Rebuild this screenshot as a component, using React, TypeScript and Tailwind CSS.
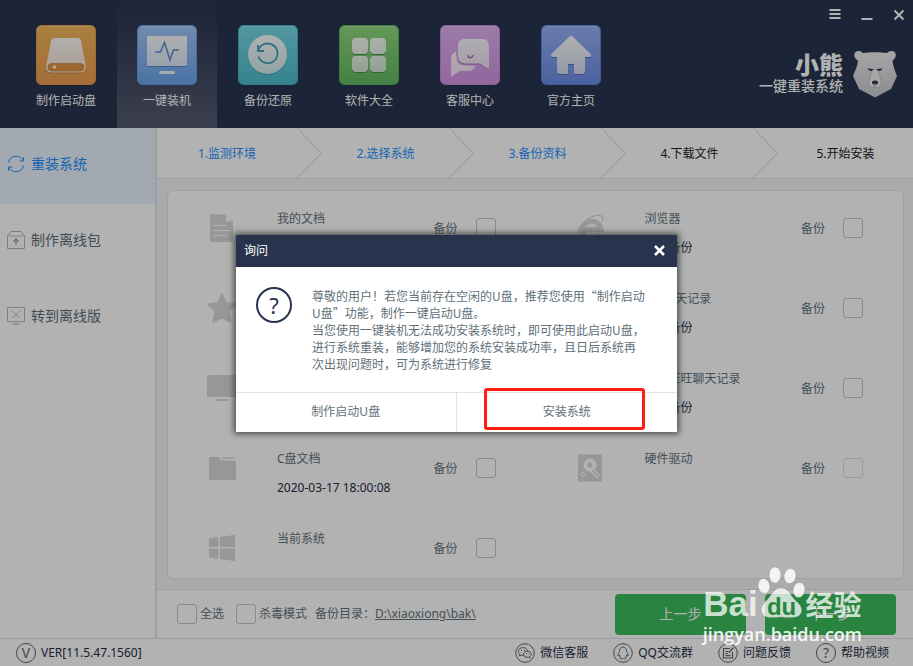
import { useId, type ReactNode } from "react";

/* ---------- Toolbar artwork ---------- */

function Tile({ top, bottom, edge, children }: { top: string; bottom: string; edge: string; children: (fill: string) => ReactNode }) {
  const id = useId();
  return (
    <svg width="60" height="60" viewBox="0 0 60 60" aria-hidden="true">
      <defs>
        <linearGradient id={`${id}bg`} x1="0" y1="0" x2="0" y2="1">
          <stop offset="0" stopColor={top} />
          <stop offset="1" stopColor={bottom} />
        </linearGradient>
        <linearGradient id={`${id}fg`} gradientUnits="userSpaceOnUse" x1="0" y1="10" x2="0" y2="50">
          <stop offset="0" stopColor="#fff" stopOpacity="0.97" />
          <stop offset="1" stopColor="#fff" stopOpacity="0.75" />
        </linearGradient>
      </defs>
      <rect x="0.5" y="0.5" width="59" height="59" rx="5" fill={`url(#${id}bg)`} stroke={edge} />
      <path d="M5 1.5H55" stroke="#fff" strokeOpacity="0.3" />
      {children(`url(#${id}fg)`)}
    </svg>
  );
}

const DiskTile = () => (
  <Tile top="#f2b95c" bottom="#ec9c50" edge="#e59b44">
    {(f) => (
      <>
        <path d="M19 14H41C43.600 14 44.600 15 45 17L49.500 40C50.500 45 49 48.500 45 48.500H15C11 48.500 9.500 45 10.500 40L15 17C15.400 15 16.400 14 19 14Z" fill="#b8641c" opacity="0.5" />
        <path d="M19 13H41C43.600 13 44.600 14 45 16L49.500 39C50.500 44 49 47.500 45 47.500H15C11 47.500 9.500 44 10.500 39L15 16C15.400 14 16.400 13 19 13Z" fill={f} />
        <rect x="12" y="38.500" width="36" height="7.500" rx="3.700" fill="#e39645" stroke="#c27a36" strokeWidth="0.600" />
        <circle cx="18.500" cy="42" r="1.800" fill="#fff" fillOpacity="0.900" />
      </>
    )}
  </Tile>
);

const MonitorTile = () => (
  <Tile top="#a2c7f7" bottom="#6ba4ec" edge="#669ee4">
    {(f) => (
      <>
        <rect x="10" y="12" width="40" height="30" rx="1" fill="#2c62a8" opacity="0.500" />
        <rect x="10" y="11" width="40" height="30" rx="1" fill={f} />
        <rect x="22" y="46" width="16" height="3" rx="1.500" fill="#fff" fillOpacity="0.900" />
        <path d="M18 27H23.500L27.500 17.500L33 35L36.500 25H42" fill="none" stroke="#5b8fd2" strokeWidth="1.500" />
      </>
    )}
  </Tile>
);

const RestoreTile = () => (
  <Tile top="#77d8e6" bottom="#4bbdcb" edge="#46b4c4">
    {(f) => (
      <>
        <circle cx="29.500" cy="30.500" r="19.500" fill="#258894" opacity="0.500" />
        <circle cx="29.500" cy="29.500" r="19.500" fill={f} />
        <path d="M21 24A9.800 9.800 0 1 1 20.500 31.500" fill="none" stroke="#43a3b1" strokeWidth="1.800" />
        <path d="M20 20V26H26" fill="none" stroke="#43a3b1" strokeWidth="1.800" />
      </>
    )}
  </Tile>
);

const AppsTile = () => (
  <Tile top="#90da80" bottom="#63b962" edge="#57b257">
    {(f) => (
      <>
        {[13, 31].map((x) =>
          [13, 31].map((y) => (
            <g key={`${x}-${y}`}>
              <rect x={x} y={y + 1} width="16" height="16" rx="4" fill="#2c7a2d" opacity="0.600" />
              <rect x={x} y={y} width="16" height="16" rx="4" fill={f} />
            </g>
          )),
        )}
      </>
    )}
  </Tile>
);

const ChatTile = () => (
  <Tile top="#e0b2f2" bottom="#d194e2" edge="#c488d6">
    {(f) => (
      <>
        <path d="M16 27C12.500 28 11 31 11 34V52L20 46H28C32 46 34 44 35.500 40.500H25C19 40.500 16.500 37 16.500 32Z" fill={f} />
        <path d="M25 15H42C46.500 15 49 17.500 49 22V45.500L39.500 39.500H26C20.500 39.500 18 36.500 18 32V22C18 17.500 20.500 15 25 15Z" fill="#8a4d9b" opacity="0.500" />
        <path d="M25 14H42C46.500 14 49 16.500 49 21V44.500L39.500 38.500H26C20.500 38.500 18 35.500 18 31V21C18 16.500 20.500 14 25 14Z" fill={f} />
        <path d="M27.500 30.500C28.500 33.500 32 33.500 33 30.500" fill="none" stroke="#a967bb" strokeWidth="1.300" strokeLinecap="round" />
      </>
    )}
  </Tile>
);

const HomeTile = () => (
  <Tile top="#98b2f5" bottom="#6b8de6" edge="#6184d8">
    {(f) => (
      <>
        <path d="M28.500 12.500Q30 11 31.500 12.500L49.500 30Q51.500 33 48 33H44V47Q44 50 41.500 50H33V40H27V50H18.500Q16 50 16 47V33H12Q8.500 33 10.500 30Z" fill="#30489a" opacity="0.500" />
        <path d="M28.500 11.500Q30 10 31.500 11.500L49.500 29Q51.500 32 48 32H44V46Q44 49 41.500 49H33V39H27V49H18.500Q16 49 16 46V32H12Q8.500 32 10.500 29Z" fill={f} />
      </>
    )}
  </Tile>
);

const BearLogo = () => (
  <svg width="44" height="48" viewBox="0 0 44 48" aria-hidden="true">
    <defs>
      <linearGradient id="bearFur" x1="0" y1="0" x2="0" y2="1">
        <stop offset="0" stopColor="#eeeef0" />
        <stop offset="1" stopColor="#c9cacf" />
      </linearGradient>
    </defs>
    <path d="M5 10.500C0 8 0 1.500 5 1C8 0.500 9 2.500 10 3C17 2 27 2 34 3C35 2.500 36 0.500 39 1C44 1.500 44 8 39.500 10.500C40 16 41.500 20 44 26L38 39L22 47.500L6 39L0 26C2.500 20 4.500 16 5 10.500Z" fill="url(#bearFur)" />
    <path d="M19 19.500H25L28.500 33L26 37.500H18L15.500 33Z" fill="#f0f0f2" stroke="#b7b8be" strokeWidth="0.800" />
    <path d="M15 18.800L20 19.600L19 20.600L16.500 20.200ZM29 18.800L24 19.600L25 20.600L27.500 20.200Z" fill="#29344f" stroke="#29344f" strokeWidth="0.700" />
    <ellipse cx="22" cy="32.500" rx="3" ry="2" fill="#29344f" />
    <path d="M22 33V36.500" stroke="#8d8f98" />
  </svg>
);

/* ---------- Sidebar artwork ---------- */

const SyncIcon = () => (
  <svg width="18" height="18" viewBox="0 0 18 18" fill="none" stroke="#1e90ff" aria-hidden="true">
    <path d="M1.500 7.500A7.800 7.800 0 0 1 16 5.500M16.500 10.500A7.800 7.800 0 0 1 2 12.500" />
    <path d="M16.500 2V6H12.500M1.500 16V12H5.500" />
  </svg>
);

const PackageIcon = () => (
  <svg width="18" height="18" viewBox="0 0 18 18" fill="none" stroke="#b3b8bc" aria-hidden="true">
    <path d="M0.500 4.500L4 0.500H14L17.500 4.500V17.500H0.500ZM0.500 5H17.500" />
    <path d="M9 14V8.500M6.500 10.500L9 8L11.500 10.500" strokeWidth="1.800" />
  </svg>
);

const OfflineIcon = () => (
  <svg width="18" height="18" viewBox="0 0 18 18" fill="none" stroke="#b3b8bc" aria-hidden="true">
    <path d="M0.500 0.500H17.500V14.500H0.500ZM9 14.500V17M5 17H13M5 3.500L13 11.500M13 3.500L5 11.500" />
  </svg>
);

/* ---------- Backup list artwork ---------- */

const GREY = "#d6d8da";

const DocumentIcon = () => (
  <svg width="30" height="30" viewBox="0 0 30 30" aria-hidden="true">
    <path d="M3 1.500H18L26 9V27.500Q26 29 24.500 29H4.500Q3 29 3 27.500Z" fill={GREY} />
    <path d="M19 2.500V8.500H25Z" fill="#fff" />
    <path d="M6 12.500H19M6 17.500H23M6 22.500H20" stroke="#fff" strokeWidth="1.200" />
  </svg>
);
const StarIcon = () => (
  <svg width="30" height="30" viewBox="0 0 30 30" aria-hidden="true">
    <path d="M15 1L19.300 10L29 11.300L22 18.300L23.700 29L15 24.500L6.300 29L8 18.300L1 11.300L10.700 10Z" fill={GREY} stroke={GREY} strokeWidth="1.500" strokeLinejoin="round" />
  </svg>
);
const DesktopIcon = () => (
  <svg width="30" height="30" viewBox="0 0 30 30" aria-hidden="true">
    <rect x="0" y="2" width="30" height="22" rx="1.500" fill={GREY} />
    <path d="M9 27H21" stroke={GREY} strokeWidth="2" />
  </svg>
);
const FolderIcon = () => (
  <svg width="30" height="30" viewBox="0 0 30 30" aria-hidden="true">
    <path d="M2 5Q2 4 3 4H12L14 7.500H28Q29 7.500 29 8.500V26Q29 27 28 27H3Q2 27 2 26Z" fill={GREY} />
    <path d="M15 5H27.500" stroke={GREY} strokeWidth="1.500" />
  </svg>
);
const WindowsIcon = () => (
  <svg width="30" height="30" viewBox="0 0 30 30" fill={GREY} aria-hidden="true">
    <path d="M2 5.200L11.500 4V14H2ZM13 3.800L28 2V14H13ZM2 15.500H11.500V26L2 24.500ZM13 15.500H28V28L13 26.200Z" />
  </svg>
);
const BrowserIcon = () => (
  <svg width="30" height="30" viewBox="0 0 30 30" fill="none" stroke={GREY} aria-hidden="true">
    <path d="M25.500 21A9.500 9.500 0 1 1 26 16.500H8" strokeWidth="5" />
    <path d="M3 20C4 11 16 1.500 24.500 2.500C28 3 28.500 5 27 8.500" strokeWidth="1.400" />
  </svg>
);
const ChatIcon = () => (
  <svg width="30" height="30" viewBox="0 0 30 30" fill={GREY} aria-hidden="true">
    <path d="M3 4H27V22H15L8 28V22H3Z" />
  </svg>
);
const HardwareIcon = () => (
  <svg width="30" height="30" viewBox="0 0 30 30" aria-hidden="true">
    <rect x="3" y="1.500" width="24" height="27" rx="1" fill={GREY} />
    <circle cx="15" cy="12" r="4.500" fill="none" stroke="#fff" strokeWidth="4" />
    <path d="M17 17L22 22.500" stroke="#fff" strokeWidth="4.500" strokeLinecap="round" />
    <path d="M18 18L22 22.500" stroke={GREY} strokeWidth="2" strokeLinecap="round" />
    <circle cx="8" cy="21.500" r="2" fill="none" stroke="#fff" />
  </svg>
);

/* ---------- Status bar artwork ---------- */

function Ring({ children }: { children: ReactNode }) {
  return (
    <svg width="20" height="20" viewBox="0 0 20 20" fill="none" stroke="#60656c" aria-hidden="true">
      <circle cx="10" cy="10" r="9.300" />
      {children}
    </svg>
  );
}
const WechatIcon = () => (
  <Ring>
    <path d="M9 12.300C8 12.500 7.200 12.400 6.300 12.100L4.500 13L4.800 11.200C2.500 9.500 3 6 6 5C9 4 12.300 5.200 12.300 8" />
    <path d="M12.500 8.300C9.800 8.300 8.500 10 8.500 11.300C8.500 13.500 11 14.700 13.300 14.100L15 15L14.800 13.400C18 11.300 16 8.300 12.500 8.300Z" />
    <path d="M6 7.500H7M9 7.500H10M11 10.800H12M13.500 10.800H14.500" />
  </Ring>
);
const PenguinIcon = () => (
  <Ring>
    <path d="M10 4C7.500 4 6.500 6 6.500 8.500C5.300 10 4.700 11.500 5 13C5.500 13.300 6 12.700 6.500 12C6.700 13 7 13.500 7.500 14C6.500 15 7 15.800 8.500 15.800C9.500 15.800 9.500 15.300 10 15.300C10.500 15.300 10.500 15.800 11.500 15.800C13 15.800 13.500 15 12.500 14C13 13.500 13.300 13 13.500 12C14 12.700 14.500 13.300 15 13C15.300 11.500 14.700 10 13.500 8.500C13.500 6 12.500 4 10 4Z" />
  </Ring>
);
const FeedbackIcon = () => (
  <Ring>
    <path d="M12 5.500H5.500V15H14.500V9M7.500 8.500H10.500M7.500 10.500H10M7.500 12.700H12.500M11 9.500L15.500 4.500" strokeWidth="1.200" />
  </Ring>
);

function LetterRing({ children }: { children: string }) {
  return (
    <span aria-hidden="true" className="flex size-5 items-center justify-center rounded-full border border-[#60656c] text-sm leading-none text-[#60656c]">
      {children}
    </span>
  );
}

/* ---------- Data ---------- */

const tools = [
  { label: "制作启动盘", Icon: DiskTile },
  { label: "一键装机", Icon: MonitorTile, active: true },
  { label: "备份还原", Icon: RestoreTile },
  { label: "软件大全", Icon: AppsTile },
  { label: "客服中心", Icon: ChatTile },
  { label: "官方主页", Icon: HomeTile },
];

const sections = [
  { label: "重装系统", Icon: SyncIcon, active: true },
  { label: "制作离线包", Icon: PackageIcon },
  { label: "转到离线版", Icon: OfflineIcon },
];

const steps = [
  { label: "1.监测环境", done: true, size: "flex-[165_1_0%]" },
  { label: "2.选择系统", done: true, size: "flex-[152_1_0%]" },
  { label: "3.备份资料", done: true, size: "flex-[152_1_0%]" },
  { label: "4.下载文件", done: false, size: "flex-[152_1_0%]" },
  { label: "5.开始安装", done: false, size: "flex-[135_1_0%]" },
];

type Item = { title: string; note?: string; Icon: () => ReactNode; disabled?: boolean };

const items: (Item | null)[] = [
  { title: "我的文档", note: "尚未备份", Icon: DocumentIcon },
  { title: "浏览器", note: "尚未备份", Icon: BrowserIcon },
  { title: "收藏夹", note: "尚未备份", Icon: StarIcon },
  { title: "QQ聊天记录", note: "尚未备份", Icon: ChatIcon },
  { title: "桌面文件", note: "尚未备份", Icon: DesktopIcon },
  { title: "阿里旺旺聊天记录", note: "尚未备份", Icon: ChatIcon },
  { title: "C盘文档", note: "2020-03-17 18:00:08", Icon: FolderIcon },
  { title: "硬件驱动", Icon: HardwareIcon, disabled: true },
  { title: "当前系统", Icon: WindowsIcon },
  null,
];

const CHECKBOX = "size-5 shrink-0 appearance-none rounded-[3px] border border-[#c6c6c6] bg-white checked:bg-[#1e90ff] disabled:border-[#dedede]";

function BackupRow({ title, note, Icon, disabled }: Item) {
  const id = useId();
  return (
    <div className="flex h-[60px] items-center pr-10 pl-[39px]">
      <Icon />
      <div className="ml-10 flex h-full flex-1 flex-col gap-[9px] pt-[11px] leading-5">
        <span className="text-[#63727e]">{title}</span>
        {note && <span className="text-[#262c48]">{note}</span>}
      </div>
      <label htmlFor={id} className="mr-[18px] pt-0.5 text-[#63727e]">备份</label>
      <input id={id} type="checkbox" disabled={disabled} className={CHECKBOX} />
    </div>
  );
}

function Watermark() {
  return (
    <div className="pointer-events-none absolute right-[51px] bottom-5 z-20 flex flex-col items-center text-white/75">
      <div className="flex h-14 items-end">
        <span className="font-['Liberation_Sans',sans-serif] text-[35px] leading-9 font-bold">Bai</span>
        <div className="relative mb-[3px] h-[54px] w-12">
          <svg width="48" height="54" viewBox="0 0 48 54" fill="#fff" fillOpacity="0.850" stroke="#777" strokeOpacity="0.400" strokeWidth="0.600" aria-hidden="true">
            <ellipse cx="17" cy="10" rx="5.800" ry="8" />
            <ellipse cx="32" cy="11" rx="6" ry="7.500" transform="rotate(8 32 11)" />
            <ellipse cx="6" cy="21" rx="5.800" ry="7.500" transform="rotate(-10 6 21)" />
            <ellipse cx="41" cy="25" rx="5.800" ry="7.500" transform="rotate(10 41 25)" />
            <path fillOpacity="0.750" d="M23 23C31 23 32 30 37 35C43 40 45 44 43 48C41 53 34 53 23 52C12 53 6 53 4 48C2 44 4 40 9 35C14 30 15 23 23 23Z" />
          </svg>
          <span className="absolute inset-x-0 bottom-0 text-center font-['Liberation_Sans',sans-serif] text-2xl leading-6 font-bold text-[#2a8440]">du</span>
        </div>
        <span className="font-['Noto_Sans_CJK_SC',sans-serif] text-[28px] leading-9 font-bold">经验</span>
      </div>
      <span className="font-['Open_Sans',sans-serif] text-lg leading-6 font-semibold text-white/90">jingyan.baidu.com</span>
    </div>
  );
}

export default function App() {
  return (
    <div className="relative flex min-h-screen flex-col bg-white font-['Noto_Sans','Noto_Sans_CJK_SC',sans-serif] text-xs">
      <header className="flex h-32 justify-between bg-[#29344f] pl-4 text-white">
        <nav className="flex gap-px">
          {tools.map(({ label, Icon, active }) => (
            <button
              key={label}
              type="button"
              className={`flex w-[100px] flex-col items-center pt-[25px] ${active ? "bg-linear-to-b from-[#29344f] to-[#565b6f]" : ""}`}
            >
              <Icon />
              <span className="mt-1.5 leading-5">{label}</span>
            </button>
          ))}
        </nav>
        <div className="flex flex-col items-end">
          <div className="flex h-[30px] items-center gap-5 pr-2">
            <button type="button" aria-label="菜单">
              <svg width="12" height="12" viewBox="0 0 12 12" stroke="#fff" strokeWidth="2"><path d="M0.500 1H11.500M0.500 5H11.500M0.500 9H11.500" /></svg>
            </button>
            <button type="button" aria-label="最小化">
              <svg width="12" height="12" viewBox="0 0 12 12" stroke="#fff" strokeWidth="2"><path d="M0.500 10H11.500" /></svg>
            </button>
            <button type="button" aria-label="关闭">
              <svg width="12" height="12" viewBox="0 0 12 12" stroke="#fff" strokeWidth="2"><path d="M1.500 1.500L10.500 10.500M10.500 1.500L1.500 10.500" /></svg>
            </button>
          </div>
          <div className="flex gap-2.5 pt-5 pr-4">
            <div className="flex flex-col items-end font-['Noto_Sans_CJK_SC',sans-serif]">
              <span className="text-2xl leading-[27px] font-black">小熊</span>
              <span className="text-sm leading-4 font-medium">一键重装系统</span>
            </div>
            <BearLogo />
          </div>
        </div>
      </header>

      <div className="flex flex-1">
        <aside className="w-[157px] border-r-2 border-[#dfe4ea]">
          {sections.map(({ label, Icon, active }) => (
            <button
              key={label}
              type="button"
              className={`flex h-[76px] w-full items-center gap-1.5 pb-1 pl-[7px] text-sm ${active ? "bg-[#e8f3fd] text-[#1e90ff]" : "text-[#5f6e78]"}`}
            >
              <Icon />
              {label}
            </button>
          ))}
        </aside>

        <main className="flex flex-1 flex-col bg-[#f2f4f7]">
          <ol className="flex h-[51px] border-b border-[#e0e2e5] bg-white">
            {steps.map(({ label, done, size }, i) => (
              <li key={label} className={`flex items-center ${size}`}>
                <span className={`flex-1 pt-0.5 text-center ${done ? "text-[#1e90ff]" : "text-[#222]"}`}>{label}</span>
                {i < steps.length - 1 && (
                  <svg width="25" height="50" viewBox="0 0 25 50" fill="none" stroke="#e2e2e2" strokeWidth="1.200" className="shrink-0" aria-hidden="true">
                    <path d="M0 0L24.500 25L0 50" />
                  </svg>
                )}
              </li>
            ))}
          </ol>

          <div className="flex-1 pt-[11px] pr-[9px] pb-2.5 pl-2.5">
            <section className="grid h-full grid-cols-2 content-start gap-y-5 rounded-md border border-[#e3e5e8] bg-white pt-[7px]">
              {items.map((item, i) => (item ? <BackupRow key={item.title} {...item} /> : <div key={i} />))}
            </section>
          </div>

          <footer className="flex h-[49px] items-center border-t border-[#e0e2e5] bg-white pr-[17px] pl-5 text-[#63727e]">
            <label className="mr-3 flex items-center gap-[3px]">
              <input type="checkbox" className={CHECKBOX} />
              全选
            </label>
            <label className="mr-2 flex items-center gap-[3px]">
              <input type="checkbox" className={CHECKBOX} />
              杀毒模式
            </label>
            <span>备份目录：</span>
            <a href="#backup-folder" className="underline">D:\xiaoxiong\bak\</a>
            <div className="ml-auto flex gap-[19px]">
              <button type="button" className="h-[41px] w-[131px] rounded bg-[#3cbd5b] text-sm text-white">上一步</button>
              <button type="button" className="h-[41px] w-[131px] rounded bg-[#3cbd5b] text-sm text-white">下一步</button>
            </div>
          </footer>
        </main>
      </div>

      <footer className="flex h-7 items-center justify-between border-t border-[#e0e2e5] pr-6 pl-4 text-[#262c48]">
        <div className="flex items-center gap-[5px]">
          <LetterRing>V</LetterRing>
          VER[11.5.47.1560]
        </div>
        <nav className="flex gap-[25px]">
          <a href="#wechat" className="flex items-center gap-[5px]"><WechatIcon />微信客服</a>
          <a href="#qq" className="flex items-center gap-[5px]"><PenguinIcon />QQ交流群</a>
          <a href="#feedback" className="flex items-center gap-[5px]"><FeedbackIcon />问题反馈</a>
          <a href="#help" className="flex items-center gap-[5px]"><LetterRing>?</LetterRing>帮助视频</a>
        </nav>
      </footer>

      <div className="absolute inset-0 z-10 flex items-center justify-center bg-black/30">
        <div role="dialog" aria-modal="true" aria-labelledby="ask-title" className="relative w-[441px] bg-white shadow-[0_0_6px_2px_rgba(45,55,45,0.8)]">
          <div className="flex h-8 items-center justify-between bg-[#28334e] pr-3 pl-2 text-white">
            <h2 id="ask-title">询问</h2>
            <button type="button" aria-label="关闭">
              <svg width="11" height="11" viewBox="0 0 11 11" stroke="#fff" strokeWidth="2.500"><path d="M1 1L10 10M10 1L1 10" /></svg>
            </button>
          </div>
          <div className="flex h-[125px] gap-5 px-5 pt-5 text-[#5f7079]">
            <span aria-hidden="true" className="flex size-9 shrink-0 items-center justify-center rounded-full border-2 border-[#28334e] text-[22px] leading-none text-[#28334e]">?</span>
            <p className="font-['Noto_Sans_CJK_SC',sans-serif] leading-[17px] whitespace-nowrap">
              尊敬的用户！若您当前存在空闲的U盘，推荐您使用“制作启动<br />
              U盘”功能，制作一键启动U盘。<br />
              当您使用一键装机无法成功安装系统时，即可使用此启动U盘，<br />
              进行系统重装，能够增加您的系统安装成功率，且日后系统再<br />
              次出现问题时，可为系统进行修复
            </p>
          </div>
          <div className="grid h-10 grid-cols-2 border-t border-[#e3e3e3] text-[#5f7079]">
            <button type="button" className="border-r border-[#e3e3e3]">制作启动U盘</button>
            <button type="button">安装系统</button>
          </div>
          <div className="pointer-events-none absolute right-8 bottom-0.5 h-[42px] w-[161px] rounded-[3px] border-3 border-[#ff1e10]" />
        </div>
      </div>

      <Watermark />
    </div>
  );
}
